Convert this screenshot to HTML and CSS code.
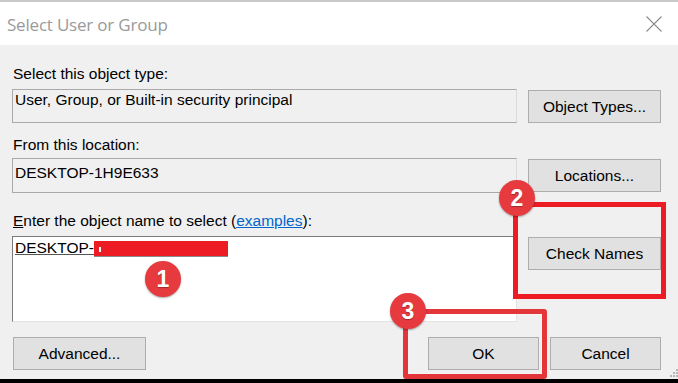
FILE: index.html
```html
<!DOCTYPE html>
<html lang="en">
<head>
    <meta charset="UTF-8">
    <title>Select User or Group</title>
    <link rel="stylesheet" href="styles.css">
</head>
<body>
    <div class="dialog">
        <div class="titlebar">
            <span class="title">Select User or Group</span>
            <svg class="close" width="16" height="16" viewBox="0 0 16 16">
                <path d="M0.5 0.5 L15.5 15.5 M15.5 0.5 L0.5 15.5" stroke="#8c8c8c" stroke-width="1.1" fill="none"/>
            </svg>
        </div>

        <div class="content">
            <div class="group g1">
                <div class="label">Select this object type:</div>
                <div class="field f1">User, Group, or Built-in security principal</div>
                <button class="btn">Object Types...</button>
            </div>

            <div class="group g2">
                <div class="label">From this location:</div>
                <div class="field f2">DESKTOP-1H9E633</div>
                <button class="btn">Locations...</button>
            </div>

            <div class="group g3">
                <div class="label"><u>E</u>nter the object name to select (<a href="#" class="link">examples</a>):</div>
                <div class="field f3"><span class="resolved">DESKTOP-</span><span class="redact"><i></i></span></div>
                <button class="btn">Check Names</button>
            </div>

            <div class="actions">
                <button class="btn">Advanced...</button>
                <div class="actions-right">
                    <button class="btn small">OK</button>
                    <button class="btn small">Cancel</button>
                </div>
            </div>
        </div>

        <!-- annotation overlays -->
        <div class="mark box2"></div>
        <div class="mark box3"></div>
        <div class="step s1">1</div>
        <div class="step s2">2</div>
        <div class="step s3">3</div>

        <svg class="grip" width="10" height="10" viewBox="0 0 10 10">
            <rect x="8" y="0" width="2" height="2" fill="#b5b5b5"/>
            <rect x="5" y="3" width="2" height="2" fill="#b5b5b5"/>
            <rect x="8" y="3" width="2" height="2" fill="#b5b5b5"/>
            <rect x="2" y="6" width="2" height="2" fill="#b5b5b5"/>
            <rect x="5" y="6" width="2" height="2" fill="#b5b5b5"/>
            <rect x="8" y="6" width="2" height="2" fill="#b5b5b5"/>
        </svg>
    </div>
</body>
</html>
```

FILE: styles.css
```css
* {
    margin: 0;
    padding: 0;
    box-sizing: border-box;
}

body {
    background: #000;
    font-family: "Liberation Sans", Arial, sans-serif;
    font-size: 15.5px;
    line-height: 18px;
    color: #000;
    overflow: hidden;
}

.dialog {
    position: relative;
    width: 678px;
    height: 379px;
    background: #f0f0f0;
}

.titlebar {
    height: 45px;
    background: #fff;
    border-top: 2px solid #c9c9c9;
    display: flex;
    align-items: center;
    justify-content: space-between;
    padding: 0 16px 0 7px;
}

.title {
    font-family: "Open Sans", "Noto Sans", sans-serif;
    font-size: 17px;
    color: #9a9a9a;
    letter-spacing: -0.2px;
    margin-top: 2px;
}

.close {
    margin-top: 1px;
}

.content {
    padding: 20px 17px 0 12px;
}

.group {
    display: grid;
    grid-template-columns: 505px 133px;
    column-gap: 11px;
}

.group .label {
    grid-column: 1;
    grid-row: 1;
    padding-left: 1px;
}

.group .field {
    grid-column: 1;
    grid-row: 2;
}

.group .btn {
    grid-column: 2;
    grid-row: 2;
    align-self: start;
    margin-top: 1px;
}

.g1 .label { margin-bottom: 6px; }
.g2 { margin-top: 13px; }
.g2 .label { margin-bottom: 4px; }
.g3 { margin-top: 19px; }
.g3 .label { margin-bottom: 6px; }

.label u {
    text-decoration-thickness: 1px;
}

.link {
    color: #0066cc;
    text-decoration: underline;
}

.field {
    border: 1px solid #a9a9a9;
    border-right-color: #dadada;
    border-bottom-color: #a9a9a9;
    background: #f0f0f0;
    padding: 1px 2px;
    white-space: nowrap;
}

.f1 { height: 34px; }
.f2 { height: 35px; padding-top: 5px; }

.f3 {
    height: 86px;
    background: #fff;
    border-color: #7a7a7a #e3e3e3 #e3e3e3 #7a7a7a;
    padding-top: 2px;
}

.resolved {
    text-decoration: underline;
    text-decoration-color: #555;
}

.redact {
    display: inline-block;
    vertical-align: -3px;
    width: 134px;
    height: 15px;
    background: #ed1c24;
    box-shadow: 0 1px 0 #8a8a8a;
    position: relative;
}

.redact i {
    position: absolute;
    left: 5px;
    top: 6px;
    width: 2px;
    height: 5px;
    background: #fff;
}

.btn {
    display: block;
    height: 33px;
    width: 133px;
    background: #e1e1e1;
    border: 1px solid #adadad;
    font-family: "Liberation Sans", Arial, sans-serif;
    font-size: 15.5px;
    color: #000;
}

.btn.small {
    width: 111px;
}

.actions {
    margin-top: 15px;
    display: flex;
    justify-content: space-between;
    padding-left: 1px;
}

.actions-right {
    display: flex;
    gap: 11px;
}

/* red annotation marks drawn over the dialog */
.mark {
    position: absolute;
    border: 5px solid #ed1c24;
}

.box2 {
    left: 513px;
    top: 202px;
    width: 153px;
    height: 97px;
}

.box3 {
    left: 403px;
    top: 309px;
    width: 144px;
    height: 70px;
    border-color: #e4353b;
    border-radius: 3px;
    box-shadow: inset 0 0 0 1px rgba(255, 255, 255, 0.25);
}

.step {
    position: absolute;
    width: 36px;
    height: 36px;
    border-radius: 50%;
    background: #e63a3f;
    box-shadow: 0 1px 2px rgba(0, 0, 0, 0.35);
    color: #fff;
    font-family: "Liberation Sans", Arial, sans-serif;
    font-weight: 700;
    font-size: 23px;
    line-height: 36px;
    text-align: center;
    text-shadow: 0 1px 1px rgba(0, 0, 0, 0.3);
}

.s1 { left: 145px; top: 261px; }
.s2 { left: 499px; top: 180px; }
.s3 { left: 390px; top: 293px; }

.grip {
    position: absolute;
    right: 0;
    bottom: 0;
}
```
